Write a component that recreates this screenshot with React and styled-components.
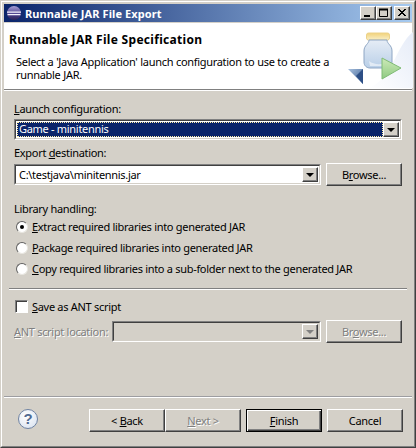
import React from "react";
import styled, { createGlobalStyle } from "styled-components";

const Global = createGlobalStyle`
  html, body { margin: 0; padding: 0; background: #d4d0c8; }
  body { font-family: "Noto Sans", "Liberation Sans", sans-serif; font-size: 11px; color: #000; letter-spacing: -0.3px; }
`;
const Frame = styled.div`
  box-sizing: border-box; width: 416px; height: 448px;
  border: 1px solid; border-color: #d4d0c8 #404040 #404040 #d4d0c8;
`;
const FrameInner = styled.div`
  box-sizing: border-box; height: 100%;
  border: 1px solid; border-color: #fff #808080 #808080 #fff;
  padding: 2px; display: flex; flex-direction: column;
`;
const TitleBar = styled.div`
  height: 18px; display: flex; align-items: center; padding: 0 2px 0 3px;
  background: linear-gradient(90deg, #0a246a, #a6caf0); flex: none;
`;
const TitleText = styled.div`
  color: #fff; font-weight: 700; font-size: 11px; margin-left: 4px; flex: 1; white-space: nowrap; letter-spacing: 0.1px;
`;
const WinBtn = styled.div`
  box-sizing: border-box; width: 16px; height: 14px; background: #d4d0c8;
  border: 1px solid; border-color: #fff #404040 #404040 #fff;
  box-shadow: inset -1px -1px 0 #808080;
  display: flex; align-items: center; justify-content: center;
  margin-left: ${p => p.$gap || 0}px;
`;
const Header = styled.div`
  flex: none; margin-top: 1px; height: 66px; background: #fff; display: flex; justify-content: space-between;
  border-bottom: 1px solid #808080; box-shadow: 0 1px 0 #fff;
`;
const HeaderText = styled.div` padding: 9px 0 0 5px; `;
const HeaderTitle = styled.div` font-weight: 700; font-size: 12px; line-height: 15px; white-space: nowrap; letter-spacing: 0.3px; `;
const HeaderDesc = styled.div` margin: 8px 0 0 7px; line-height: 13px; width: 330px; letter-spacing: -0.3px; word-spacing: 0.2px; `;
const Body = styled.div` flex: 1; display: flex; flex-direction: column; padding: 11px 10px 0; margin-top: 1px; `;
const Label = styled.div`
  line-height: 13px; height: 13px; white-space: nowrap; margin-top: ${p => p.$mt || 0}px; width: ${p => p.$w ? p.$w + "px" : "auto"};
  color: ${p => p.$off ? "#808080" : "#000"}; text-shadow: ${p => p.$off ? "1px 1px 0 #fff" : "none"};
`;
const U = styled.span` text-decoration: underline; `;
const Sunken = styled.div`
  box-sizing: border-box; height: 21px; width: ${p => p.$w}px; flex: none;
  border: 1px solid; border-color: #808080 #fff #fff #808080;
  margin-top: ${p => p.$mt || 0}px;
`;
const SunkenInner = styled.div`
  box-sizing: border-box; height: 100%; display: flex; align-items: stretch; padding: 1px 1px 1px 0;
  border: 1px solid; border-color: #404040 #d4d0c8 #d4d0c8 #404040;
  background: ${p => p.$off ? "#d4d0c8" : "#fff"};
`;
const Selected = styled.div`
  flex: 1; background: #0a246a; color: #fff; outline: 1px dotted #ffeea8; outline-offset: -1px;
  line-height: 14px; padding-left: 2px; margin-left: 1px; white-space: nowrap;
`;
const Value = styled.div` flex: 1; line-height: 15px; padding-left: 3px; white-space: nowrap; `;
const Arrow = styled.div`
  box-sizing: border-box; width: 16px; flex: none; background: #d4d0c8;
  border: 1px solid; border-color: #fff #404040 #404040 #fff;
  box-shadow: inset -1px -1px 0 #808080;
  display: flex; align-items: center; justify-content: center;
  &::after { content: ""; border: 4px solid transparent; border-top: 4px solid ${p => p.$off ? "#808080" : "#000"}; border-bottom: 0; }
`;
const Row = styled.div` display: flex; align-items: center; gap: ${p => p.$gap || 0}px; margin-top: ${p => p.$mt || 0}px; `;
const Button = styled.div`
  box-sizing: border-box; width: ${p => p.$w || 76}px; height: 23px; flex: none; background: #d4d0c8;
  border: 1px solid; border-color: #fff #404040 #404040 #fff;
  box-shadow: inset -1px -1px 0 #808080;
  display: flex; align-items: center; justify-content: center; white-space: nowrap;
  margin-left: ${p => p.$ml || 0}px;
  color: ${p => p.$off ? "#808080" : "#000"}; text-shadow: ${p => p.$off ? "1px 1px 0 #fff" : "none"};
`;
const DefaultButton = styled(Button)`
  border-color: #000; box-shadow: inset 1px 1px 0 #fff, inset -1px -1px 0 #404040, inset -2px -2px 0 #808080;
`;
const Choice = styled.div`
  height: 21px; display: flex; align-items: center; white-space: nowrap;
  margin: ${p => p.$m || "0 0 0 2px"}; gap: ${p => p.$g || 4}px;
`;
const Radio = styled.div`
  box-sizing: border-box; width: 12px; height: 12px; border-radius: 50%; background: #fff;
  border: 1px solid; border-color: #606060 #e8e6e0 #e8e6e0 #606060;
  display: flex; align-items: center; justify-content: center;
  &::after { content: ""; width: 4px; height: 4px; border-radius: 50%; background: ${p => p.$on ? "#000" : "transparent"}; }
`;
const Check = styled.div`
  box-sizing: border-box; width: 13px; height: 13px; background: #fff;
  border: 1px solid; border-color: #808080 #fff #fff #808080; box-shadow: inset 1px 1px 0 #404040;
`;
const Rule = styled.div` height: 1px; background: #808080; box-shadow: 0 1px 0 #fff; margin: 9px -5px 0; `;
const Footer = styled.div` flex: none; border-top: 1px solid #9d9da1; box-shadow: inset 0 1px 0 #fff; height: 48px; display: flex; align-items: flex-start; padding: 12px 0 0 0; box-sizing: border-box; `;
const Help = styled.div`
  box-sizing: border-box; width: 20px; height: 20px; border-radius: 50%; margin: 0 0 0 14px; flex: none;
  border: 1.5px solid #6f83a3; background: radial-gradient(circle at 40% 35%, #fff, #d5dfee);
  color: #506a92; font: 700 15px/17px "Liberation Sans", sans-serif; text-align: center; letter-spacing: 0;
`;
const ButtonBar = styled.div` margin-left: 51px; display: flex; `;

const Logo = () => (
  <svg width="67" height="65" viewBox="0 0 67 65" style={{ flex: "none" }}>
    <defs>
      <linearGradient id="bg" x1="0" y1="1" x2="1" y2="0"><stop offset="0" stopColor="#fff" /><stop offset="1" stopColor="#e6ecf8" /></linearGradient>
      <linearGradient id="jar" x1="0" y1="0" x2="0" y2="1"><stop offset="0" stopColor="#e6edf6" /><stop offset="1" stopColor="#b9cfe8" /></linearGradient>
      <linearGradient id="lid" x1="0" y1="0" x2="0" y2="1"><stop offset="0" stopColor="#f2d27a" /><stop offset="1" stopColor="#f8efc8" /></linearGradient>
      <linearGradient id="gr" x1="0" y1="0" x2="0" y2="1"><stop offset="0" stopColor="#cdeab8" /><stop offset="1" stopColor="#8fca82" /></linearGradient>
      <linearGradient id="bl" x1="0" y1="0" x2="1" y2="1"><stop offset="0" stopColor="#a9c1de" /><stop offset="1" stopColor="#34598f" /></linearGradient>
    </defs>
    <path d="M67 9V65H22C46 58 50 22 67 9Z" fill="url(#bg)" />
    <rect x="20.5" y="10" width="23" height="7" rx="2" fill="url(#lid)" stroke="#ecd28a" />
    <path d="M23 17h18c0 4 5 5 5 11v11c0 4-3 6-6 6H24c-3 0-6-2-6-6V28c0-6 5-7 5-11Z" fill="url(#jar)" stroke="#8ea6c4" />
    <path d="M23 38c5 4 13 4 19 1v4H24Z" fill="#fff" opacity=".55" />
    <path d="M36 35L55 45 36 56Z" fill="url(#gr)" stroke="#7fbb75" />
    <path d="M2 46H17V61Z" fill="url(#bl)" />
    <path d="M17 46V61L10 53Z" fill="#2d4f86" />
  </svg>
);

const EclipseIcon = () => (
  <svg width="14" height="14" viewBox="0 0 14 14">
    <defs>
      <linearGradient id="ec" x1="0" y1="0" x2="0" y2="1"><stop offset="0" stopColor="#a79fd6" /><stop offset=".6" stopColor="#4a3f8a" /><stop offset="1" stopColor="#2c2255" /></linearGradient>
    </defs>
    <circle cx="7" cy="7" r="7" fill="url(#ec)" />
    <path d="M0 5.5h14v1.2H0zM.5 8h13v1.2H.5z" fill="#f2f0fa" />
  </svg>
);

export default function App() {
  return (
    <>
      <Global />
      <Frame>
        <FrameInner>
          <TitleBar>
            <EclipseIcon />
            <TitleText>Runnable JAR File Export</TitleText>
            <WinBtn>
              <svg width="12" height="10" viewBox="0 0 12 10"><rect x="2" y="7" width="6" height="2" fill="#000" /></svg>
            </WinBtn>
            <WinBtn>
              <svg width="12" height="10" viewBox="0 0 12 10"><path d="M1.5 1.5h8v7h-8z" fill="none" stroke="#000" /><path d="M1 1.5h9" stroke="#000" strokeWidth="2" /></svg>
            </WinBtn>
            <WinBtn $gap={2}>
              <svg width="12" height="10" viewBox="0 0 12 10"><path d="M2 1l7 7M3 1l7 7M9 1L2 8M10 1L3 8" stroke="#000" /></svg>
            </WinBtn>
          </TitleBar>
          <Header>
            <HeaderText>
              <HeaderTitle>Runnable JAR File Specification</HeaderTitle>
              <HeaderDesc>Select a 'Java Application' launch configuration to use to create a runnable JAR.</HeaderDesc>
            </HeaderText>
            <Logo />
          </Header>
          <Body>
            <Label><U>L</U>aunch configuration:</Label>
            <Sunken $mt={4} $w={388}>
              <SunkenInner>
                <Selected>Game - minitennis</Selected>
                <Arrow />
              </SunkenInner>
            </Sunken>
            <Label $mt={6}>Export <U>d</U>estination:</Label>
            <Row $mt={4} $gap={5}>
              <Sunken $w={307}>
                <SunkenInner>
                  <Value>C:\testjava\minitennis.jar</Value>
                  <Arrow />
                </SunkenInner>
              </Sunken>
              <Button><span>B<U>r</U>owse...</span></Button>
            </Row>
            <Label $mt={16}>Library handling:</Label>
            <Row $mt={1}><Choice><Radio $on /><span><U>E</U>xtract required libraries into generated JAR</span></Choice></Row>
            <Choice><Radio /><span><U>P</U>ackage required libraries into generated JAR</span></Choice>
            <Choice><Radio /><span><U>C</U>opy required libraries into a sub-folder next to the generated JAR</span></Choice>
            <Rule />
            <Choice $m="7px 0 0 1px" $g={4}><Check /><span><U>S</U>ave as ANT script</span></Choice>
            <Row $mt={3} $gap={5}>
              <Label $w={93} $off><U>A</U>NT script location:</Label>
              <Sunken $w={209}>
                <SunkenInner $off>
                  <Value />
                  <Arrow $off />
                </SunkenInner>
              </Sunken>
              <Button $off><span>Br<U>o</U>wse...</span></Button>
            </Row>
          </Body>
          <Footer>
            <Help>?</Help>
            <ButtonBar>
              <Button><span>&lt; <U>B</U>ack</span></Button>
              <Button $off><span><U>N</U>ext &gt;</span></Button>
              <DefaultButton $ml={5}><span><U>F</U>inish</span></DefaultButton>
              <Button $ml={5}>Cancel</Button>
            </ButtonBar>
          </Footer>
        </FrameInner>
      </Frame>
    </>
  );
}
